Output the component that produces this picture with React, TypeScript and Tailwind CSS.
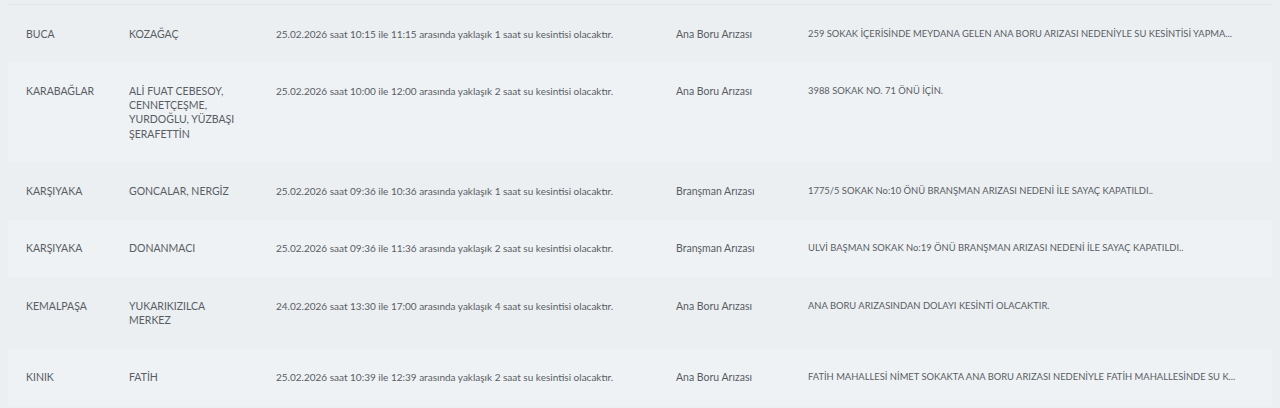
import React from "react";

const rows = [
  ["BUCA", "KOZAĞAÇ", "25.02.2026 saat 10:15 ile 11:15 arasında yaklaşık 1 saat su kesintisi olacaktır.", "Ana Boru Arızası", "259 SOKAK İÇERİSİNDE MEYDANA GELEN ANA BORU ARIZASI NEDENİYLE SU KESİNTİSİ YAPMA..."],
  ["KARABAĞLAR", "ALİ FUAT CEBESOY, CENNETÇEŞME, YURDOĞLU, YÜZBAŞI ŞERAFETTİN", "25.02.2026 saat 10:00 ile 12:00 arasında yaklaşık 2 saat su kesintisi olacaktır.", "Ana Boru Arızası", "3988 SOKAK NO. 71 ÖNÜ İÇİN."],
  ["KARŞIYAKA", "GONCALAR, NERGİZ", "25.02.2026 saat 09:36 ile 10:36 arasında yaklaşık 1 saat su kesintisi olacaktır.", "Branşman Arızası", "1775/5 SOKAK No:10 ÖNÜ BRANŞMAN ARIZASI NEDENİ İLE SAYAÇ KAPATILDI.."],
  ["KARŞIYAKA", "DONANMACI", "25.02.2026 saat 09:36 ile 11:36 arasında yaklaşık 2 saat su kesintisi olacaktır.", "Branşman Arızası", "ULVİ BAŞMAN SOKAK No:19 ÖNÜ BRANŞMAN ARIZASI NEDENİ İLE SAYAÇ KAPATILDI.."],
  ["KEMALPAŞA", "YUKARIKIZILCA MERKEZ", "24.02.2026 saat 13:30 ile 17:00 arasında yaklaşık 4 saat su kesintisi olacaktır.", "Ana Boru Arızası", "ANA BORU ARIZASINDAN DOLAYI KESİNTİ OLACAKTIR."],
  ["KINIK", "FATİH", "25.02.2026 saat 10:39 ile 12:39 arasında yaklaşık 2 saat su kesintisi olacaktır.", "Ana Boru Arızası", "FATİH MAHALLESİ NİMET SOKAKTA ANA BORU ARIZASI NEDENİYLE FATİH MAHALLESİNDE SU K..."],
];

const cellCls = [
  "text-[10.5px]",
  "text-[10.5px]",
  "text-[10px]",
  "text-[10.5px]",
  "text-[9.4px] whitespace-nowrap overflow-hidden",
];

export default function App() {
  return (
    <div className="min-h-[408px] bg-[#eceff2] pt-[4px] px-[8px] font-['Lato',sans-serif] leading-[14.3px] text-[#585d63]">
      <table className="w-[1264px] table-fixed border-collapse border-t border-[#e1e5e9]">
        <colgroup>
          <col className="w-[103px]" />
          <col className="w-[147px]" />
          <col className="w-[400px]" />
          <col className="w-[132px]" />
          <col />
        </colgroup>
        <tbody>
          {rows.map((r, i) => (
            <tr key={i} className={i % 2 === 1 ? "bg-[#eff2f5]" : "bg-[#eceff2]"}>
              {r.map((c, j) => (
                <td key={j} className={"align-top py-[21.5px] pl-[18px] pr-[18px] " + cellCls[j]}>
                  {c}
                </td>
              ))}
            </tr>
          ))}
        </tbody>
      </table>
    </div>
  );
}
